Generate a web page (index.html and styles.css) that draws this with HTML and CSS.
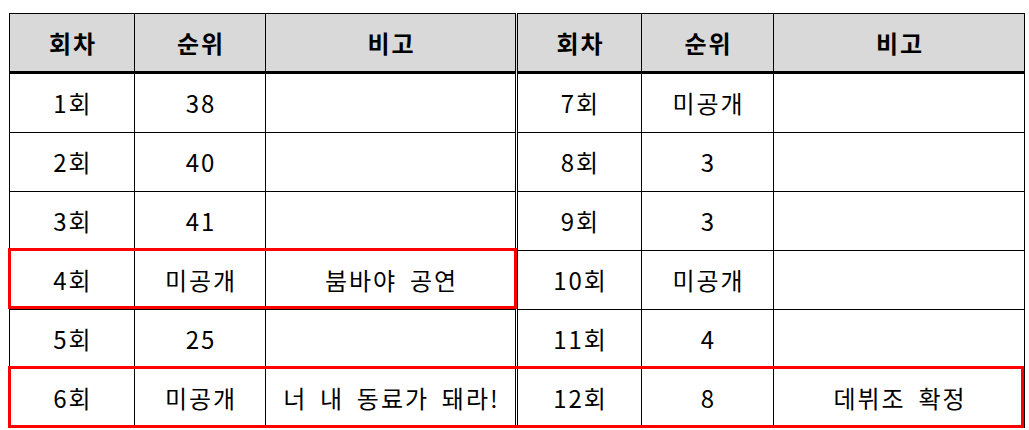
FILE: index.html
```html
<!DOCTYPE html>
<html lang="ko">
<head>
<meta charset="utf-8">
<link rel="stylesheet" href="styles.css">
</head>
<body>
<div class="wrap">
  <table class="rank">
    <colgroup>
      <col class="c1"><col class="c2"><col class="c3"><col class="c4"><col class="c5"><col class="c6">
    </colgroup>
    <thead>
      <tr><th>회차</th><th>순위</th><th class="split">비고</th><th>회차</th><th>순위</th><th>비고</th></tr>
    </thead>
    <tbody>
      <tr><td>1회</td><td>38</td><td class="split"></td><td>7회</td><td>미공개</td><td></td></tr>
      <tr><td>2회</td><td>40</td><td class="split"></td><td>8회</td><td>3</td><td></td></tr>
      <tr><td>3회</td><td>41</td><td class="split"></td><td>9회</td><td>3</td><td></td></tr>
      <tr><td>4회</td><td>미공개</td><td class="split">붐바야 공연</td><td>10회</td><td>미공개</td><td></td></tr>
      <tr><td>5회</td><td>25</td><td class="split"></td><td>11회</td><td>4</td><td></td></tr>
      <tr><td>6회</td><td>미공개</td><td class="split">너 내 동료가 돼라!</td><td>12회</td><td>8</td><td>데뷔조 확정</td></tr>
    </tbody>
  </table>
  <div class="mark mark-a"></div>
  <div class="mark mark-b"></div>
</div>
</body>
</html>
```
FILE: styles.css
```css
html, body {
  margin: 0;
  padding: 0;
  background: #fff;
}
body {
  font-family: "Noto Sans CJK KR", "Noto Sans", sans-serif;
  color: #000;
}
.wrap {
  position: relative;
  margin: 13px 0 0 9px;
  width: 1015px;
}
.rank {
  border-collapse: collapse;
  table-layout: fixed;
  width: 1015px;
  font-size: 24px;
  letter-spacing: 2px;
  word-spacing: 4px;
}
.c1 { width: 125px; }
.c2 { width: 131px; }
.c3 { width: 251px; }
.c4 { width: 125px; }
.c5 { width: 132px; }
.c6 { width: 251px; }
.rank th, .rank td {
  border: 1px solid #000;
  text-align: center;
  vertical-align: middle;
  padding: 0 0 0 2px;
  line-height: 1;
}
.rank th {
  background: #d9d9d9;
  font-weight: 700;
  height: 57px;
  border-bottom: 3px solid #000;
}
.rank td {
  height: 58px;
}
.rank .split {
  border-right: 3px double #000;
}
.mark {
  position: absolute;
  border: 3px solid #ff0000;
  box-sizing: border-box;
}
.mark-a {
  left: -1px;
  top: 235px;
  width: 509px;
  height: 61px;
}
.mark-b {
  left: -1px;
  top: 353px;
  width: 1016px;
  height: 62px;
}
```
